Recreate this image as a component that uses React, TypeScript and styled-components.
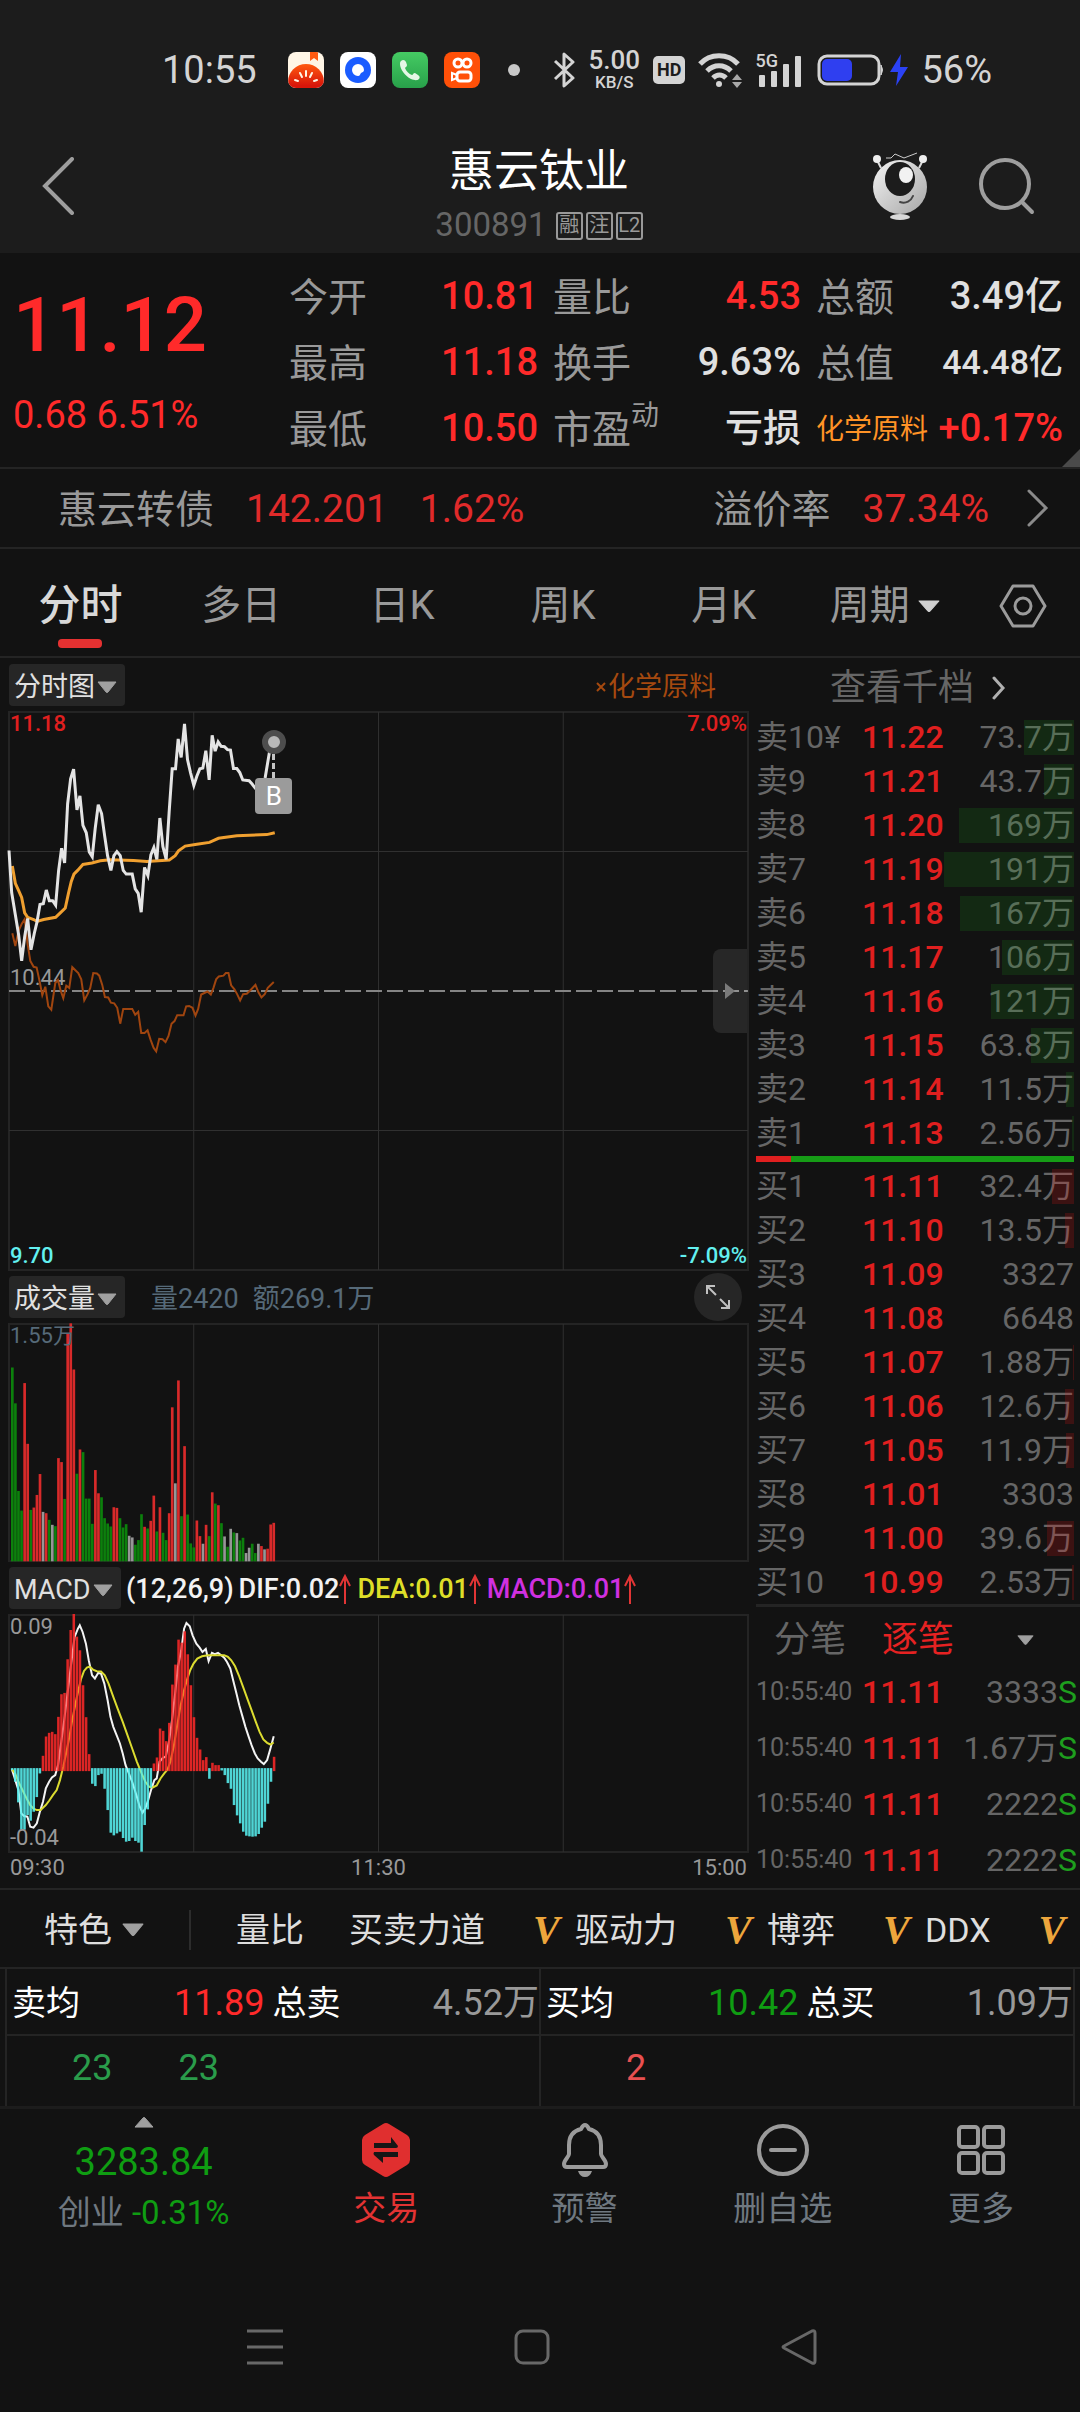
import React from "react";
import styled, { createGlobalStyle } from "styled-components";

const c = {
  bg: "#121212",
  bar: "#1c1c1c",
  line: "#242424",
  red: "#ff2a2a",
  deepRed: "#e01f1f",
  green: "#0f9d12",
  text: "#e0e0e0",
  label: "#999999",
  dim: "#666666",
  slate: "#566a79",
};

const GlobalStyle = createGlobalStyle`
  * { box-sizing: border-box; margin: 0; padding: 0; }
  body { background: ${c.bg}; color: ${c.text}; font-family: Roboto, "Noto Sans CJK SC", sans-serif; }
  button, select { font: inherit; color: inherit; background: none; border: 0; cursor: pointer; }
  svg { display: block; flex: none; }
  table { border-collapse: collapse; }
`;

const Page = styled.div`
  display: flex;
  flex-direction: column;
  min-height: 100vh;
  overflow: hidden;
`;

/* ---------- status bar ---------- */

const StatusBar = styled.div`
  display: flex;
  align-items: center;
  height: 140px;
  padding: 0 88px 0 162px;
  background: ${c.bar};
  color: #d4d4d4;
  font-size: 38px;
  line-height: 44px;
`;
const AppIcons = styled.div`
  display: flex;
  align-items: center;
  gap: 16px;
  margin: 0 auto 0 31px;
`;
const StatusIcons = styled.div`
  display: flex;
  align-items: center;
  gap: 13px;
`;
const NetSpeed = styled.div`
  display: flex;
  flex-direction: column;
  align-items: center;
  font-size: 26px;
  line-height: 24px;
  font-weight: 500;
  small { font-size: 17px; line-height: 20px; }
`;
const HdBadge = styled.span`
  padding: 0 4px;
  border-radius: 5px;
  background: #d4d4d4;
  color: ${c.bar};
  font-size: 18px;
  line-height: 28px;
  font-weight: 700;
`;
const Signal = styled.div`
  display: flex;
  align-items: flex-end;
  height: 34px;
`;
const NetType = styled.span`
  align-self: flex-start;
  width: 22px;
  margin-right: -20px;
  font-size: 18px;
  line-height: 16px;
  font-weight: 500;
`;

/* ---------- title bar ---------- */

const TitleBar = styled.header`
  display: grid;
  grid-template-columns: 1fr auto 1fr;
  align-items: start;
  height: 113px;
  padding: 4px 44px 0 42px;
  background: ${c.bar};
`;
const IconButton = styled.button`
  display: flex;
  align-items: center;
  justify-content: center;
`;
const BackButton = styled(IconButton)`
  justify-self: start;
  height: 68px;
  margin-top: 8px;
`;
const TitleBlock = styled.div`
  display: flex;
  flex-direction: column;
  align-items: center;
  gap: 6px;
  h1 { color: #ffffff; font-size: 45px; line-height: 56px; font-weight: 400; }
`;
const StockCode = styled.div`
  display: flex;
  align-items: center;
  gap: 3px;
  color: ${c.dim};
  font-size: 33px;
  line-height: 38px;
`;
const Flag = styled.span`
  width: 27px;
  height: 28px;
  margin-top: 2px;
  border: 2px solid ${c.label};
  border-radius: 3px;
  color: ${c.label};
  font-size: 20px;
  line-height: 23px;
  text-align: center;
  &:first-of-type { margin-left: 6px; }
`;
const TitleActions = styled.div`
  display: flex;
  align-items: center;
  justify-content: flex-end;
  gap: 50px;
  height: 68px;
  margin-top: 8px;
`;

/* ---------- quote ---------- */

const Quote = styled.section`
  position: relative;
  display: grid;
  grid-template-columns: 261fr 249fr 248fr 247fr;
  column-gap: 15px;
  height: 216px;
  padding: 12px 17px 0 13px;
  border-bottom: 2px solid ${c.line};
`;
const LastPrice = styled.div`
  display: flex;
  flex-direction: column;
  color: ${c.red};
  strong { font-size: 76px; line-height: 120px; font-weight: 500; }
  span { font-size: 38px; line-height: 60px; font-weight: 400; }
`;
const StatList = styled.dl`
  display: grid;
  grid-template-rows: repeat(3, 66px);
`;
const Stat = styled.div`
  display: flex;
  justify-content: space-between;
  align-items: center;
`;
const StatLabel = styled.dt<{ $tag?: boolean }>`
  color: ${(p) => (p.$tag ? "#ff9326" : c.label)};
  font-size: ${(p) => (p.$tag ? 28 : 39)}px;
  line-height: 56px;
  white-space: nowrap;
  sup { font-size: 28px; line-height: 0; vertical-align: 18px; }
`;
const StatValue = styled.dd<{ $color?: string; $small?: boolean }>`
  color: ${(p) => p.$color || c.text};
  font-size: ${(p) => (p.$small ? 34 : 38)}px;
  line-height: 60px;
  padding-bottom: 4px;
  font-weight: 500;
  white-space: nowrap;
`;
const Corner = styled.svg`
  position: absolute;
  right: 0;
  bottom: 0;
`;

const BondRow = styled.a`
  display: flex;
  align-items: center;
  height: 80px;
  padding: 3px 31px 0 58px;
  border-bottom: 2px solid ${c.line};
  color: ${c.label};
  font-size: 39px;
  line-height: 56px;
  text-decoration: none;
`;
const BondValue = styled.span<{ $push?: boolean }>`
  margin-left: 32px;
  margin-right: ${(p) => (p.$push ? "auto" : "0")};
  padding-bottom: 2px;
  color: #e02a2a;
`;
const BondChevron = styled.span`
  margin-left: 38px;
  padding-bottom: 3px;
`;

/* ---------- period tabs ---------- */

const PeriodTabs = styled.nav`
  display: grid;
  grid-template-columns: repeat(6, 161fr) 115fr;
  height: 109px;
  border-bottom: 2px solid ${c.line};
`;
const PeriodTab = styled.button<{ $active?: boolean }>`
  position: relative;
  display: flex;
  align-items: center;
  justify-content: center;
  gap: 8px;
  padding-top: 6px;
  color: ${(p) => (p.$active ? "#d8d8d8" : c.label)};
  font-size: ${(p) => (p.$active ? 42 : 40)}px;
  font-weight: ${(p) => (p.$active ? 500 : 400)};
  line-height: 60px;
  &::after {
    content: "";
    position: absolute;
    left: 50%;
    bottom: 8px;
    width: 44px;
    height: 9px;
    margin-left: -22px;
    border-radius: 4px;
    background: ${(p) => (p.$active ? "#e53131" : "transparent")};
  }
`;

/* ---------- charts ---------- */

const Market = styled.main`
  display: grid;
  grid-template-columns: minmax(0, 749fr) minmax(0, 331fr);
  border-bottom: 2px solid ${c.line};
`;
const Charts = styled.section`
  padding: 1px 0 0 8px;
`;
const ChartHead = styled.div`
  display: flex;
  align-items: center;
  height: 52px;
  font-size: 27px;
  line-height: 40px;
  white-space: nowrap;
`;
const Picker = styled.label`
  display: flex;
  align-items: center;
  gap: 2px;
  height: 42px;
  margin-left: 1px;
  padding: 3px 8px 0 5px;
  border-radius: 4px;
  background: #262626;
  color: #e0e0e0;
  select { appearance: none; outline: 0; }
`;
const Sector = styled.span`
  display: flex;
  align-items: center;
  gap: 2px;
  margin-left: auto;
  padding: 4px 33px 0 0;
  color: #a5490f;
`;
const VolumeNote = styled.span`
  margin-left: 26px;
  padding-top: 3px;
  color: ${c.slate};
  & + & { margin-left: 14px; }
`;
const ExpandButton = styled(IconButton)`
  width: 48px;
  height: 48px;
  margin: 0 7px 0 auto;
  border-radius: 50%;
  background: #262626;
`;
const MacdNote = styled.span<{ $color: string }>`
  display: flex;
  align-items: center;
  margin-left: 5px;
  padding-top: 2px;
  color: ${(p) => p.$color};
  font-weight: 500;
`;
const Plot = styled.div<{ $height: number }>`
  position: relative;
  height: ${(p) => p.$height}px;
  border: 2px solid ${c.line};
`;
const Canvas = styled.svg`
  position: absolute;
  inset: -1px;
  width: calc(100% + 2px);
  height: calc(100% + 2px);
  overflow: visible;
`;
const Scale = styled.span<{ $top?: string; $bottom?: string; $right?: boolean; $color?: string; $bold?: boolean }>`
  position: absolute;
  ${(p) => (p.$bottom ? `bottom: ${p.$bottom};` : `top: ${p.$top || "-2px"};`)}
  ${(p) => (p.$right ? "right: 0;" : "left: 0;")}
  color: ${(p) => p.$color || c.label};
  font-size: 22px;
  line-height: 26px;
  font-weight: ${(p) => (p.$bold ? 500 : 400)};
`;
const TradeMark = styled.div`
  position: absolute;
  left: 35.8%;
  top: 17px;
  width: 38px;
  margin-left: -19px;
  display: flex;
  flex-direction: column;
  align-items: center;
`;
const MarkDot = styled.i`
  width: 24px;
  height: 24px;
  border: 6px solid #4d4d4d;
  border-radius: 50%;
  background: #b8b8b8;
`;
const MarkStem = styled.i`
  height: 24px;
  border-left: 3px dashed #c4c4c4;
`;
const MarkTag = styled.b`
  width: 37px;
  height: 36px;
  border-radius: 4px;
  background: #9b9b9b;
  color: #ffffff;
  font-size: 26px;
  line-height: 36px;
  font-weight: 400;
  text-align: center;
`;
const SideHandle = styled(IconButton)`
  position: absolute;
  right: 0;
  top: 50%;
  width: 34px;
  height: 84px;
  margin-top: -42px;
  border-radius: 8px 0 0 8px;
  background: rgba(255, 255, 255, 0.09);
`;
const TimeAxis = styled.div`
  display: flex;
  justify-content: space-between;
  height: 34px;
  padding: 2px 2px 0;
  color: ${c.label};
  font-size: 22px;
  line-height: 26px;
`;

/* ---------- order book ---------- */

const Side = styled.section`
  padding-left: 7px;
`;
const DepthLink = styled.a`
  display: flex;
  align-items: center;
  gap: 18px;
  height: 57px;
  padding: 2px 0 0 74px;
  color: ${c.dim};
  font-size: 36px;
  line-height: 54px;
  text-decoration: none;
`;
const Book = styled.table`
  width: 100%;
  table-layout: fixed;
  font-size: 32px;
  line-height: 44px;
  color: ${c.dim};
  th { width: 106px; font-weight: 400; text-align: left; }
  td { height: 44px; font-weight: 400; white-space: nowrap; }
`;
const BookPrice = styled.td`
  width: 84px;
  color: ${c.deepRed};
  && { font-weight: 500; }
`;
const BookSize = styled.td`
  position: relative;
  padding-right: 6px;
  text-align: right;
`;
const SizeBar = styled.i<{ $buy: boolean }>`
  position: absolute;
  right: 6px;
  top: 5px;
  bottom: 4px;
  background: ${(p) => (p.$buy ? "rgba(230, 20, 20, 0.2)" : "rgba(25, 150, 25, 0.18)")};
`;
const Ratio = styled.div`
  display: flex;
  height: 6px;
  margin: 1px 6px 2px 0;
  background: #169c16;
  i { width: 11%; background: ${c.deepRed}; }
`;
const TickTabs = styled.div`
  display: flex;
  align-items: center;
  height: 60px;
  padding: 8px 46px 0 18px;
  border-top: 3px solid ${c.line};
  font-size: 36px;
  line-height: 50px;
`;
const TickTab = styled.button<{ $active?: boolean }>`
  margin-right: 36px;
  color: ${(p) => (p.$active ? "#e62222" : c.dim)};
  &:last-of-type { margin-right: auto; }
`;
const Ticks = styled(Book)`
  line-height: 56px;
  th { font-size: 25px; }
  td { height: 56px; }
`;
const TickSize = styled.td`
  padding-right: 3px;
  text-align: right;
  em { color: #1e9e1e; font-style: normal; }
`;

/* ---------- indicator strip ---------- */

const Strip = styled.nav`
  display: flex;
  align-items: center;
  gap: 45px;
  height: 79px;
  padding: 2px 0 0 44px;
  border-bottom: 2px solid ${c.line};
  font-size: 34px;
  line-height: 50px;
  white-space: nowrap;
  overflow: hidden;
`;
const StripItem = styled.button`
  display: flex;
  align-items: center;
  flex: none;
  gap: 10px;
  color: #dedede;
`;
const StripDivider = styled.i`
  flex: none;
  width: 2px;
  height: 40px;
  background: #2c2c2c;
`;
const Vip = styled.b`
  width: 35px;
  padding-left: 3px;
  color: #eda63c;
  font-family: "Liberation Serif", serif;
  font-size: 40px;
  font-style: italic;
  text-align: left;
`;

/* ---------- totals ---------- */

const Totals = styled.section`
  display: grid;
  grid-template-columns: 1fr 1fr;
  margin: 0 5px;
  border-left: 2px solid ${c.line};
  & > * { border-right: 2px solid ${c.line}; }
`;
const TotalsRow = styled.dl`
  display: grid;
  grid-template-columns: 68px 35% 76px 1fr;
  align-items: center;
  height: 67px;
  padding: 2px 0 0 5px;
  border-bottom: 2px solid ${c.line};
  dt { color: #ffffff; font-size: 34px; line-height: 50px; }
  dt:nth-of-type(2) { padding-left: 8px; }
`;
const TotalValue = styled.dd<{ $color: string }>`
  color: ${(p) => p.$color};
  font-size: 36px;
  line-height: 50px;
  text-align: right;
`;
const Queue = styled.div<{ $color: string; $indent: number }>`
  display: flex;
  align-items: center;
  gap: 66px;
  height: 70px;
  padding-left: ${(p) => p.$indent}px;
  padding-bottom: 7px;
  color: ${(p) => p.$color};
  font-size: 36px;
`;

/* ---------- bottom navigation ---------- */

const BottomNav = styled.nav`
  display: grid;
  grid-template-columns: 287fr repeat(4, 198fr);
  height: 175px;
  border-top: 3px solid ${c.bar};
`;
const NavItem = styled.button<{ $active?: boolean }>`
  display: flex;
  flex-direction: column;
  align-items: center;
  gap: 10px;
  padding-top: 14px;
  color: ${(p) => (p.$active ? "#e33333" : "#6f7880")};
  font-size: 33px;
  line-height: 44px;
`;
const IndexItem = styled(NavItem)`
  gap: 9px;
  padding-top: 8px;
`;
const IndexValue = styled.span`
  color: ${c.green};
  font-size: 38px;
  line-height: 50px;
`;
const IndexChange = styled.span`
  line-height: 34px;
  em { color: ${c.green}; font-style: normal; }
`;
const SystemNav = styled.nav`
  display: grid;
  grid-template-columns: repeat(3, 1fr);
  height: 132px;
  margin-top: auto;
  padding: 0 148px 0 132px;
`;

/* ---------- data ---------- */

const HIGH_LINE =
  "26,406 34,520 45,580 55,635 64,705 73,640 82,590 92,675 102,630 110,600 119,552 129,550 138,513 147,542 157,542 166,554 175,460 184,400 193,440 202,280 211,212 220,186 230,296 239,258 248,338 258,358 267,410 276,423 285,345 294,282 304,306 313,365 322,420 332,460 341,420 350,409 360,420 369,460 378,470 396,470 405,510 414,522 423,573 433,452 443,474 452,418 461,398 470,430 479,318 488,395 498,430 507,300 516,185 526,185 534,104 543,154 553,63 562,160 571,195 581,230 590,205 599,185 608,183 617,136 627,215 636,94 645,137 654,112 663,124 673,125 682,133 691,134 700,184 710,184 719,195 728,215 747,217 756,226 766,238 788,240 795,210 808,140 821,92";
const AVG_LINE =
  "36,448 45,495 55,515 64,533 73,575 82,587 100,593 110,598 130,593 166,587 180,575 195,562 205,520 213,490 221,470 232,460 248,444 275,440 300,434 330,431 400,433 440,436 507,432 525,420 535,407 555,394 590,389 628,384 655,373 710,366 800,363 824,358";
const SECTOR_LINE =
  "36,630 45,665 54,625 64,605 73,592 82,660 90,705 100,721 109,723 119,765 126,798 135,775 144,828 153,837 165,765 173,757 181,785 189,806 198,772 207,778 216,722 234,738 243,755 252,812 262,795 270,778 279,738 290,739 297,745 306,770 314,803 324,804 332,818 342,820 351,832 360,875 369,835 396,835 405,851 414,843 423,900 433,900 442,893 451,918 460,940 468,950 477,916 487,917 496,925 505,908 514,875 523,868 531,852 550,852 558,828 567,827 577,832 586,853 594,835 603,796 622,788 632,796 640,778 648,755 656,747 670,745 677,738 685,738 693,771 703,782 711,795 720,812 729,795 740,794 750,785 766,770 775,790 784,804 794,795 803,778 821,762";
const DIF_LINE =
  "25,627 39,690 45,760 51,768 58,770 64,800 71,803 78,790 84,757 91,725 97,685 104,665 110,652 117,645 123,615 136,480 149,330 158,230 165,205 169,195 175,215 182,250 188,300 195,345 201,355 208,338 214,340 221,370 228,420 234,470 240,500 247,525 254,550 260,580 266,615 273,640 280,665 290,710 296,740 302,758 308,745 314,720 320,690 327,660 332,655 338,605 345,593 351,590 358,545 364,485 371,400 377,320 384,270 390,205 395,188 402,198 408,225 416,250 423,262 429,275 436,266 442,303 449,278 455,282 462,278 468,284 475,292 481,305 488,325 494,360 501,400 507,435 514,470 520,500 527,530 533,555 540,580 546,595 553,605 559,612 566,600 573,565 580,528";
const DEA_LINE =
  "25,627 32,640 39,665 51,700 58,720 64,735 71,746 78,750 86,750 97,735 104,722 112,705 120,690 127,660 134,620 140,580 147,530 153,480 160,430 166,390 172,355 178,332 184,322 190,319 197,328 205,333 214,334 222,345 230,370 240,410 250,448 260,485 270,525 280,565 290,605 300,640 308,665 316,680 324,682 332,676 340,655 348,640 355,628 361,605 368,560 375,500 382,440 390,390 397,355 403,330 410,310 418,295 428,288 440,285 475,285 483,290 490,300 498,318 506,345 515,380 524,415 533,450 542,485 550,515 558,538 566,548 573,553 580,547";

const VOLUME =
  "G291 G399 G663 G722 R338 R521 G720 R713 R675 R612 W726 R730 G750 W765 G769 R564 R576 G687 R190 R158 R297 G611 R538 G546 G686 G686 G762 R600 R670 G682 G745 G761 G770 R712 R714 G745 G773 G763 W798 W803 G825 G811 G733 R771 G776 R753 R677 G785 R712 G789 G811 R730 R411 W640 R330 G739 R528 G734 G821 G833 R752 R799 W822 R765 G799 R667 G701 R706 G760 W800 G831 W777 G788 W790 G812 G804 W850 W834 G822 G850 W822 R829 W839 R837 R764 R759".split(" ");
const VOLUME_COLORS: Record<string, string> = { G: "#0c800c", R: "#d82a2a", W: "#969696" };

const MACD = [
  630, 665, 727, 809, 809, 765, 782, 755, 711, 640, 587, 529, 518, 515, 522, 470, 402, 398, 297, 209, 161, 229, 270,
  375, 471, 582, 671, 678, 645, 641, 686, 750, 818, 826, 820, 815, 834, 845, 843, 833, 843, 848, 875, 795, 748, 683,
  610, 592, 505, 512, 543, 488, 373, 313, 238, 247, 213, 282, 375, 471, 533, 568, 600, 591, 656, 608, 615, 615, 631,
  645, 669, 686, 735, 766, 790, 815, 827, 829, 830, 829, 822, 803, 785, 731, 665, 590,
];

type Level = [string, string, string, number];
const SELLS: Level[] = [
  ["卖10¥", "11.22", "73.7万", 50],
  ["卖9", "11.21", "43.7万", 30],
  ["卖8", "11.20", "169万", 115],
  ["卖7", "11.19", "191万", 130],
  ["卖6", "11.18", "167万", 114],
  ["卖5", "11.17", "106万", 72],
  ["卖4", "11.16", "121万", 83],
  ["卖3", "11.15", "63.8万", 43],
  ["卖2", "11.14", "11.5万", 8],
  ["卖1", "11.13", "2.56万", 2],
];
const BUYS: Level[] = [
  ["买1", "11.11", "32.4万", 22],
  ["买2", "11.10", "13.5万", 9],
  ["买3", "11.09", "3327", 0],
  ["买4", "11.08", "6648", 0],
  ["买5", "11.07", "1.88万", 1],
  ["买6", "11.06", "12.6万", 9],
  ["买7", "11.05", "11.9万", 8],
  ["买8", "11.01", "3303", 0],
  ["买9", "11.00", "39.6万", 27],
  ["买10", "10.99", "2.53万", 2],
];
const TICKS = ["3333", "1.67万", "2222", "2222"];

/* ---------- small drawings ---------- */

const Caret = ({ w = 20, h = 12, color = "#a0a0a0", up = false }) => (
  <svg width={w} height={h} viewBox="0 0 20 12" preserveAspectRatio="none">
    <path
      d={up ? "M1 11h18L11 1q-1-1-2 0z" : "M1 1h18L11 11q-1 1-2 0z"}
      fill={color}
      stroke={color}
      strokeLinejoin="round"
    />
  </svg>
);

const Chevron = ({ w, h, color, stroke, back = false }: { w: number; h: number; color: string; stroke: number; back?: boolean }) => (
  <svg width={w} height={h} viewBox={`0 0 ${w} ${h}`} fill="none" stroke={color} strokeWidth={stroke} strokeLinecap="round">
    <path d={back ? `M${w - 2} 2L3 ${h / 2}L${w - 2} ${h - 2}` : `M2 2L${w - 3} ${h / 2}L2 ${h - 2}`} />
  </svg>
);

const UpArrow = () => (
  <svg width="13" height="30" viewBox="0 0 13 30" fill="none" stroke="#e23535">
    <path d="M6 2V30" strokeWidth="2" />
    <path d="M1 12L6 2L11 12" strokeWidth="2" />
  </svg>
);

const Tomato = () => (
  <svg width="36" height="36" viewBox="0 0 36 36">
    <defs>
      <clipPath id="tomatoClip"><rect width="36" height="36" rx="8" /></clipPath>
      <linearGradient id="tomato" x1="0" y1="0" x2="0" y2="1">
        <stop offset="0" stopColor="#ff5a10" /><stop offset="0.600" stopColor="#d8160a" />
      </linearGradient>
    </defs>
    <g clipPath="url(#tomatoClip)">
      <rect width="36" height="36" fill="#fff6e6" />
      <path d="M22 0h8v9l-4-3l-4 3z" fill="#ff5a10" />
      <circle cx="18" cy="30" r="18" fill="url(#tomato)" />
      <path d="M18 19v5M12 21l2 4M24 21l-2 4M7 28l3 1M29 28l-3 1" stroke="#fff6e6" strokeWidth="2" strokeLinecap="round" />
    </g>
  </svg>
);
const BlueDot = () => (
  <svg width="36" height="36" viewBox="0 0 36 36">
    <rect width="36" height="36" rx="8" fill="#fff" />
    <circle cx="18" cy="18" r="13" fill="#1a5cff" />
    <path d="M18 12a6 6 0 0 1 6 6c0 2-2 2-3 3s-1 3-3 3a6 6 0 0 1 0-12z" fill="#fff" />
  </svg>
);
const PhoneApp = () => (
  <svg width="36" height="36" viewBox="0 0 36 36">
    <defs>
      <linearGradient id="phone" x1="0" y1="0" x2="0" y2="1">
        <stop offset="0" stopColor="#45cb63" /><stop offset="1" stopColor="#28a04a" />
      </linearGradient>
    </defs>
    <rect width="36" height="36" rx="8" fill="url(#phone)" />
    <path d="M9 9c2-2 4-1 5 1l1 3c0 2-2 2-2 3c1 3 4 6 7 7c1 0 1-2 3-2l3 2c2 1 2 3 1 4c-2 2-5 1-8 0C13 24 8 17 8 12c0-1 0-2 1-3z" fill="#e4f7e6" />
  </svg>
);
const VideoApp = () => (
  <svg width="36" height="36" viewBox="0 0 36 36" fill="none" stroke="#fff" strokeWidth="3">
    <rect width="36" height="36" rx="8" fill="#ff5008" stroke="none" />
    <circle cx="14" cy="11" r="4" />
    <circle cx="23" cy="11" r="4" />
    <rect x="13" y="20" width="14" height="9" rx="3" />
    <path d="M13 23l-5-2v7l5-2" strokeWidth="2" />
  </svg>
);

const Bluetooth = () => (
  <svg width="22" height="36" viewBox="0 0 22 36" fill="none" stroke="#d4d4d4" strokeWidth="3" strokeLinejoin="round">
    <path d="M2 9L20 26L11 34V2L20 10L2 27" />
  </svg>
);
const Wifi = () => (
  <svg width="44" height="36" viewBox="0 0 44 36" fill="none" stroke="#d4d4d4" strokeWidth="5">
    <path d="M2 12C12 1 30 1 40 12M9 19C16 12 26 12 33 19M15 26C19 22 24 22 28 26" />
    <circle cx="21" cy="32" r="3" fill="#d4d4d4" stroke="none" />
    <path d="M34 28l5-6l5 6zM34 30l5 6l5-6z" fill="#a8a8a8" stroke="none" />
  </svg>
);
const Bars = () => (
  <svg width="44" height="32" viewBox="0 0 44 32" fill="#d4d4d4">
    <rect x="2" y="20" width="6" height="12" rx="1" />
    <rect x="14" y="16" width="6" height="16" rx="1" />
    <rect x="26" y="9" width="6" height="23" rx="1" />
    <rect x="38" y="1" width="6" height="31" rx="1" />
  </svg>
);
const Battery = () => (
  <svg width="94" height="34" viewBox="0 0 94 34">
    <rect x="5" y="3" width="60" height="28" rx="8" fill="none" stroke="#d4d4d4" strokeWidth="3" />
    <rect x="8" y="6" width="30" height="22" rx="5" fill="#2f3ff0" />
    <path d="M67 12q3 5 0 10z" fill="#d4d4d4" stroke="#d4d4d4" />
    <path d="M87 1L76 19h8l-2 14l12-19h-8z" fill="#2b42f5" />
  </svg>
);

const Robot = () => (
  <svg width="56" height="68" viewBox="0 0 56 68">
    <defs>
      <linearGradient id="robot" x1="0" y1="0" x2="1" y2="1">
        <stop offset="0" stopColor="#f4f4f4" /><stop offset="1" stopColor="#a6a6a6" />
      </linearGradient>
    </defs>
    <path d="M5 8l4 8M51 8l-4 8" stroke="#ddd" strokeWidth="2" />
    <circle cx="5" cy="7" r="4" fill="#eee" />
    <circle cx="51" cy="7" r="4" fill="#eee" />
    <path d="M14 6h5l4-4l9 4l13-5" stroke="#ccc" strokeWidth="1" fill="none" />
    <circle cx="28" cy="35" r="27" fill="url(#robot)" />
    <ellipse cx="28" cy="27" rx="15" ry="17" fill="#1c1c1c" />
    <ellipse cx="34" cy="23" rx="7" ry="8" fill="#f2f2f2" />
    <path d="M28 50c6 2 11-1 13-6" stroke="#444" strokeWidth="2" fill="none" strokeLinecap="round" />
    <ellipse cx="28" cy="65" rx="10" ry="3" fill="#d8d8d8" />
  </svg>
);
const SearchIcon = () => (
  <svg width="58" height="58" viewBox="0 0 58 58" fill="none" stroke="#9e9e9e" strokeWidth="4" strokeLinecap="round">
    <circle cx="27" cy="27" r="24" />
    <path d="M44 45l10 10" />
  </svg>
);
const Hexagon = () => (
  <svg width="48" height="44" viewBox="0 0 48 44" fill="none" stroke="#9b9b9b" strokeWidth="3" strokeLinejoin="round">
    <path d="M14 2h20l12 20l-12 20H14L2 22z" />
    <circle cx="24" cy="22" r="8" />
  </svg>
);
const ExpandIcon = () => (
  <svg width="26" height="26" viewBox="0 0 26 26" fill="none" stroke="#c0c0c0" strokeWidth="2">
    <path d="M2 10V2h8M2 2l9 9M24 16v8h-8M24 24l-9-9" />
  </svg>
);
const TradeIcon = () => (
  <svg width="50" height="54" viewBox="0 0 50 54">
    <path d="M22 1q3-2 6 0l18 11q3 2 3 5v20q0 3-3 5L28 53q-3 2-6 0L4 42q-3-2-3-5V17q0-3 3-5z" fill="#e02f2f" />
    <path d="M13 20h17v-6l7 9q0 2-2 2H13zM37 29H13q-1 2 0 3l9 8v-6h15z" fill="#161616" />
  </svg>
);
const BellIcon = () => (
  <svg width="46" height="54" viewBox="0 0 46 54" fill="none" stroke="#9b9b9b" strokeWidth="4" strokeLinejoin="round">
    <path d="M23 2c-2 0-3 2-4 4C11 8 7 14 7 22v9c0 3-5 6-5 10c0 2 1 3 3 3h36c2 0 3-1 3-3c0-4-5-7-5-10v-9c0-8-4-14-12-16c-1-2-2-4-4-4z" />
    <path d="M16 48h14q-2 6-7 6t-7-6z" fill="#9b9b9b" stroke="none" />
  </svg>
);
const MinusIcon = () => (
  <svg width="54" height="54" viewBox="0 0 54 54" fill="none" stroke="#9b9b9b" strokeWidth="4" strokeLinecap="round">
    <circle cx="27" cy="27" r="24" />
    <path d="M15 27h24" />
  </svg>
);
const GridIcon = () => (
  <svg width="48" height="54" viewBox="0 0 48 54" fill="none" stroke="#9b9b9b" strokeWidth="4">
    <rect x="2" y="4" width="19" height="20" rx="3" />
    <rect x="27" y="4" width="19" height="20" rx="3" />
    <rect x="2" y="30" width="19" height="20" rx="3" />
    <rect x="27" y="30" width="19" height="20" rx="3" />
  </svg>
);

/* ---------- parts ---------- */

const Line = ({ points, color, width = 3 }: { points: string; color: string; width?: number }) => (
  <polyline points={points} fill="none" stroke={color} strokeWidth={width} vectorEffect="non-scaling-stroke" />
);

const GridLines = ({ rows = false }) => (
  <Canvas viewBox="0 0 4 4" preserveAspectRatio="none" fill="none" stroke="#303030">
    <path d="M1 0V4M2 0V4M3 0V4" vectorEffect="non-scaling-stroke" />
    {rows && <path d="M0 1H4M0 3H4" vectorEffect="non-scaling-stroke" />}
    {rows && <path d="M0 2H4" stroke="#858585" strokeWidth="2" strokeDasharray="16 5" vectorEffect="non-scaling-stroke" />}
  </Canvas>
);

const ChartPicker = ({ name, label }: { name: string; label: string }) => (
  <Picker>
    <select aria-label={label} defaultValue={name}>
      <option>{name}</option>
    </select>
    <Caret />
  </Picker>
);

const Levels = ({ rows, buy = false }: { rows: Level[]; buy?: boolean }) => (
  <Book>
    <tbody>
      {rows.map(([name, price, size, bar]) => (
        <tr key={name}>
          <th scope="row">{name}</th>
          <BookPrice>{price}</BookPrice>
          <BookSize>
            {size}
            <SizeBar $buy={buy} style={{ width: bar }} />
          </BookSize>
        </tr>
      ))}
    </tbody>
  </Book>
);

export default function App() {
  return (
    <Page>
      <GlobalStyle />
      <StatusBar>
        <span>10:55</span>
        <AppIcons>
          <Tomato />
          <BlueDot />
          <PhoneApp />
          <VideoApp />
          <svg width="40" height="12" viewBox="0 0 40 12"><circle cx="18" cy="6" r="6" fill="#c8c8c8" /></svg>
        </AppIcons>
        <StatusIcons>
          <Bluetooth />
          <NetSpeed>5.00<small>KB/S</small></NetSpeed>
          <HdBadge>HD</HdBadge>
          <Wifi />
          <Signal><NetType>5G</NetType><Bars /></Signal>
          <Battery />
          <span>56%</span>
        </StatusIcons>
      </StatusBar>

      <TitleBar>
        <BackButton aria-label="返回"><Chevron w={32} h={58} color="#9e9e9e" stroke={4} back /></BackButton>
        <TitleBlock>
          <h1>惠云钛业</h1>
          <StockCode>300891<Flag>融</Flag><Flag>注</Flag><Flag>L2</Flag></StockCode>
        </TitleBlock>
        <TitleActions>
          <IconButton aria-label="助手"><Robot /></IconButton>
          <IconButton aria-label="搜索"><SearchIcon /></IconButton>
        </TitleActions>
      </TitleBar>

      <Quote>
        <LastPrice><strong>11.12</strong><span>0.68 6.51%</span></LastPrice>
        <StatList>
          <Stat><StatLabel>今开</StatLabel><StatValue $color={c.red}>10.81</StatValue></Stat>
          <Stat><StatLabel>最高</StatLabel><StatValue $color={c.red}>11.18</StatValue></Stat>
          <Stat><StatLabel>最低</StatLabel><StatValue $color={c.red}>10.50</StatValue></Stat>
        </StatList>
        <StatList>
          <Stat><StatLabel>量比</StatLabel><StatValue $color={c.red}>4.53</StatValue></Stat>
          <Stat><StatLabel>换手</StatLabel><StatValue>9.63%</StatValue></Stat>
          <Stat><StatLabel>市盈<sup>动</sup></StatLabel><StatValue>亏损</StatValue></Stat>
        </StatList>
        <StatList>
          <Stat><StatLabel>总额</StatLabel><StatValue>3.49亿</StatValue></Stat>
          <Stat><StatLabel>总值</StatLabel><StatValue $small>44.48亿</StatValue></Stat>
          <Stat><StatLabel $tag>化学原料</StatLabel><StatValue $color={c.red}>+0.17%</StatValue></Stat>
        </StatList>
        <Corner width="18" height="18" viewBox="0 0 18 18"><path d="M18 0V18H0z" fill="#4a4a4a" /></Corner>
      </Quote>

      <BondRow href="#bond">
        惠云转债
        <BondValue>142.201</BondValue>
        <BondValue $push>1.62%</BondValue>
        溢价率
        <BondValue>37.34%</BondValue>
        <BondChevron><Chevron w={22} h={38} color="#8a8a8a" stroke={3} /></BondChevron>
      </BondRow>

      <PeriodTabs>
        <PeriodTab $active>分时</PeriodTab>
        <PeriodTab>多日</PeriodTab>
        <PeriodTab>日K</PeriodTab>
        <PeriodTab>周K</PeriodTab>
        <PeriodTab>月K</PeriodTab>
        <PeriodTab>周期<Caret w={22} h={12} color="#d0d0d0" /></PeriodTab>
        <PeriodTab aria-label="设置"><Hexagon /></PeriodTab>
      </PeriodTabs>

      <Market>
        <Charts>
          <ChartHead>
            <ChartPicker name="分时图" label="主图" />
            <Sector>
              <svg width="10" height="10" viewBox="0 0 10 10" stroke="#a5490f" strokeWidth="2"><path d="M1 1l8 8M9 1l-8 8" /></svg>
              化学原料
            </Sector>
          </ChartHead>
          <Plot $height={560}>
            <GridLines rows />
            <Scale $color={c.deepRed} $bold>11.18</Scale>
            <Scale $color={c.deepRed} $bold $right>7.09%</Scale>
            <Scale $bottom="50%">10.44</Scale>
            <Scale $color="#62f0f0" $bold $bottom="0">9.70</Scale>
            <Scale $color="#62f0f0" $bold $bottom="0" $right>-7.09%</Scale>
            <Canvas viewBox="26 31 2219 1511" preserveAspectRatio="none">
              <Line points={SECTOR_LINE} color="#a0450f" width={2} />
              <Line points={AVG_LINE} color="#f0a030" />
              <Line points={HIGH_LINE} color="#e4e4e4" />
            </Canvas>
            <TradeMark><MarkDot /><MarkStem /><MarkTag>B</MarkTag></TradeMark>
            <SideHandle aria-label="展开">
              <svg width="10" height="16" viewBox="0 0 10 16"><path d="M0 0l10 8l-10 8z" fill="#7a7a7a" /></svg>
            </SideHandle>
          </Plot>

          <ChartHead>
            <ChartPicker name="成交量" label="副图一" />
            <VolumeNote>量2420</VolumeNote>
            <VolumeNote>额269.1万</VolumeNote>
            <ExpandButton aria-label="全屏"><ExpandIcon /></ExpandButton>
          </ChartHead>
          <Plot $height={239}>
            <GridLines />
            <Canvas viewBox="26 160 2219 714" preserveAspectRatio="none">
              {VOLUME.map((v, i) => {
                const top = Number(v.slice(1));
                return <rect key={i} x={32 + i * 9.235} y={top} width="8" height={875 - top} fill={VOLUME_COLORS[v[0]]} />;
              })}
            </Canvas>
            <Scale $color={c.slate}>1.55万</Scale>
          </Plot>

          <ChartHead>
            <ChartPicker name="MACD" label="副图二" />
            <MacdNote $color="#f2f2f2">(12,26,9)</MacdNote>
            <MacdNote $color="#f2f2f2">DIF:0.02<UpArrow /></MacdNote>
            <MacdNote $color="#dede28">DEA:0.01<UpArrow /></MacdNote>
            <MacdNote $color="#d030e0">MACD:0.01<UpArrow /></MacdNote>
          </ChartHead>
          <Plot $height={239}>
            <GridLines />
            <Canvas viewBox="19 164 1566 712" preserveAspectRatio="none">
              <Line points={DIF_LINE} color="#f4f4f4" width={2} />
              <Line points={DEA_LINE} color="#dcdc30" width={2} />
              {MACD.map((v, i) => {
                const up = v < 625;
                return (
                  <rect
                    key={i}
                    x={23 + i * 6.53}
                    y={up ? v : 624}
                    width="5.4"
                    height={up ? 633 - v : v - 624}
                    fill={up ? "#f82828" : "#58f0f0"}
                    fillOpacity="0.88"
                  />
                );
              })}
            </Canvas>
            <Scale>0.09</Scale>
            <Scale $bottom="0">-0.04</Scale>
          </Plot>
          <TimeAxis><span>09:30</span><span>11:30</span><span>15:00</span></TimeAxis>
        </Charts>

        <Side>
          <DepthLink href="#depth">查看千档<Chevron w={14} h={24} color="#b0b0b0" stroke={3} /></DepthLink>
          <Levels rows={SELLS} />
          <Ratio><i /></Ratio>
          <Levels rows={BUYS} buy />
          <TickTabs>
            <TickTab>分笔</TickTab>
            <TickTab $active>逐笔</TickTab>
            <Caret w={17} h={10} />
          </TickTabs>
          <Ticks>
            <tbody>
              {TICKS.map((size, i) => (
                <tr key={i}>
                  <th scope="row">10:55:40</th>
                  <BookPrice>11.11</BookPrice>
                  <TickSize>{size}<em>S</em></TickSize>
                </tr>
              ))}
            </tbody>
          </Ticks>
        </Side>
      </Market>

      <Strip>
        <StripItem>特色<Caret w={22} h={13} /></StripItem>
        <StripDivider />
        <StripItem>量比</StripItem>
        <StripItem>买卖力道</StripItem>
        <StripItem><Vip>V</Vip>驱动力</StripItem>
        <StripItem><Vip>V</Vip>博弈</StripItem>
        <StripItem><Vip>V</Vip>DDX</StripItem>
        <StripItem><Vip>V</Vip></StripItem>
      </Strip>

      <Totals>
        <TotalsRow>
          <dt>卖均</dt><TotalValue $color={c.red}>11.89</TotalValue>
          <dt>总卖</dt><TotalValue $color={c.label}>4.52万</TotalValue>
        </TotalsRow>
        <TotalsRow>
          <dt>买均</dt><TotalValue $color={c.green}>10.42</TotalValue>
          <dt>总买</dt><TotalValue $color={c.label}>1.09万</TotalValue>
        </TotalsRow>
        <Queue $color="#2a9c4b" $indent={65}><span>23</span><span>23</span></Queue>
        <Queue $color="#e85050" $indent={85}><span>2</span></Queue>
      </Totals>

      <BottomNav>
        <IndexItem>
          <Caret w={20} h={11} up />
          <IndexValue>3283.84</IndexValue>
          <IndexChange>创业 <em>-0.31%</em></IndexChange>
        </IndexItem>
        <NavItem $active><TradeIcon />交易</NavItem>
        <NavItem><BellIcon />预警</NavItem>
        <NavItem><MinusIcon />删自选</NavItem>
        <NavItem><GridIcon />更多</NavItem>
      </BottomNav>
      <SystemNav>
        <IconButton aria-label="最近任务">
          <svg width="36" height="36" viewBox="0 0 36 36" stroke="#686868" strokeWidth="3"><path d="M0 2H36M0 18H36M0 34H36" /></svg>
        </IconButton>
        <IconButton aria-label="主屏幕">
          <svg width="36" height="36" viewBox="0 0 36 36" fill="none" stroke="#686868" strokeWidth="3"><rect x="2" y="2" width="32" height="32" rx="7" /></svg>
        </IconButton>
        <IconButton aria-label="后退">
          <svg width="36" height="36" viewBox="0 0 36 36" fill="none" stroke="#686868" strokeWidth="3" strokeLinejoin="round"><path d="M31 2q3-1 3 2v28q0 3-3 2L3 19q-2-1 0-2z" /></svg>
        </IconButton>
      </SystemNav>
    </Page>
  );
}
